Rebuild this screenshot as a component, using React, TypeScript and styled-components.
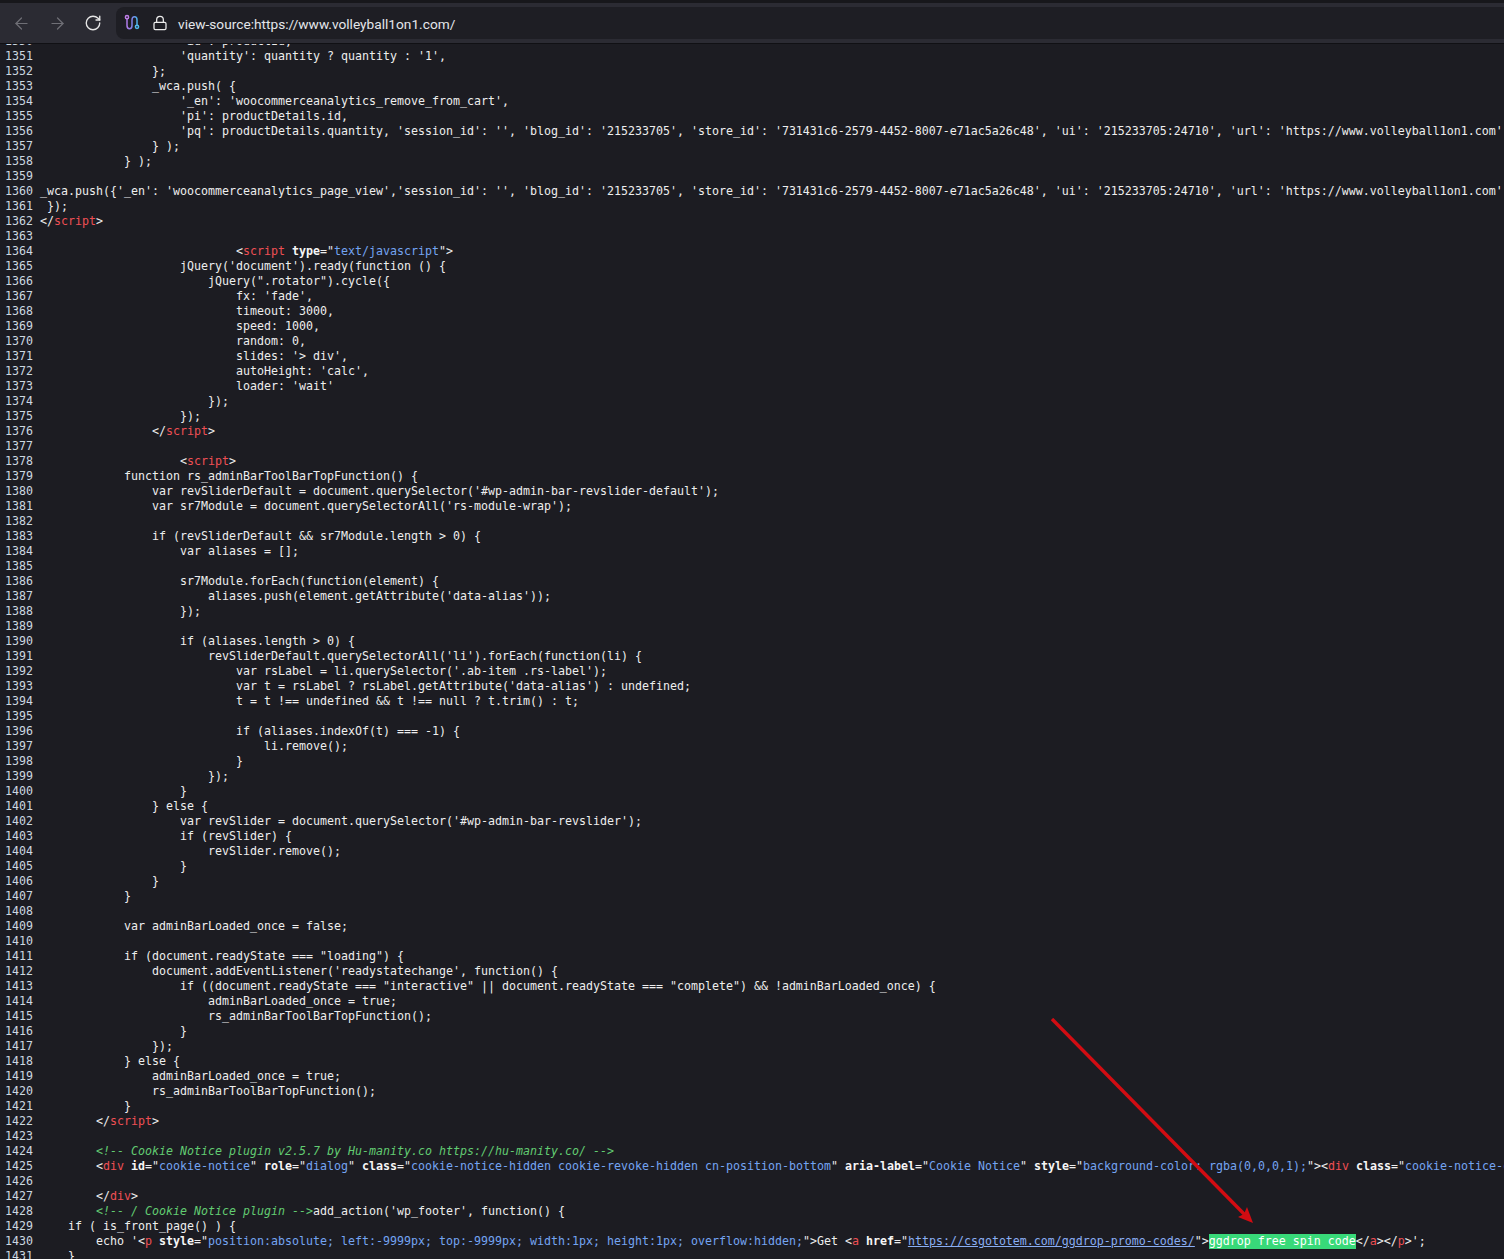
import styled, { createGlobalStyle } from "styled-components";
import { ArrowLeft, ArrowRight, Lock, RotateCw } from "lucide-react";

type TokenKind = "plain" | "tag" | "attr" | "val" | "comment" | "link" | "mark";
type Token = [TokenKind, string];
type Line = string | Token[];

const indent = (n: number, text: string) => " ".repeat(n) + text;
const tag = (name: string, open = "<", close = ">"): Token[] => [
    ["plain", open],
    ["tag", name],
    ["plain", close],
];

const lines: Line[] = [
    indent(20, "'id': productId,"),
    indent(20, "'quantity': quantity ? quantity : '1',"),
    indent(16, "};"),
    indent(16, "_wca.push( {"),
    indent(20, "'_en': 'woocommerceanalytics_remove_from_cart',"),
    indent(20, "'pi': productDetails.id,"),
    indent(20, "'pq': productDetails.quantity, 'session_id': '', 'blog_id': '215233705', 'store_id': '731431c6-2579-4452-8007-e71ac5a26c48', 'ui': '215233705:24710', 'url': 'https://www.volleyball1on1.com', 'woo_version': '9.9.5'"),
    indent(16, "} );"),
    indent(12, "} );"),
    "",
    "_wca.push({'_en': 'woocommerceanalytics_page_view','session_id': '', 'blog_id': '215233705', 'store_id': '731431c6-2579-4452-8007-e71ac5a26c48', 'ui': '215233705:24710', 'url': 'https://www.volleyball1on1.com', 'woo_version': '9.9.5'",
    " });",
    tag("script", "</"),
    "",
    [["plain", indent(28, "<")], ["tag", "script"], ["plain", " "], ["attr", "type"], ["plain", "=\""], ["val", "text/javascript"], ["plain", "\">"]],
    indent(20, "jQuery('document').ready(function () {"),
    indent(24, "jQuery(\".rotator\").cycle({"),
    indent(28, "fx: 'fade',"),
    indent(28, "timeout: 3000,"),
    indent(28, "speed: 1000,"),
    indent(28, "random: 0,"),
    indent(28, "slides: '> div',"),
    indent(28, "autoHeight: 'calc',"),
    indent(28, "loader: 'wait'"),
    indent(24, "});"),
    indent(20, "});"),
    tag("script", indent(16, "</")),
    "",
    tag("script", indent(20, "<")),
    indent(12, "function rs_adminBarToolBarTopFunction() {"),
    indent(16, "var revSliderDefault = document.querySelector('#wp-admin-bar-revslider-default');"),
    indent(16, "var sr7Module = document.querySelectorAll('rs-module-wrap');"),
    "",
    indent(16, "if (revSliderDefault && sr7Module.length > 0) {"),
    indent(20, "var aliases = [];"),
    "",
    indent(20, "sr7Module.forEach(function(element) {"),
    indent(24, "aliases.push(element.getAttribute('data-alias'));"),
    indent(20, "});"),
    "",
    indent(20, "if (aliases.length > 0) {"),
    indent(24, "revSliderDefault.querySelectorAll('li').forEach(function(li) {"),
    indent(28, "var rsLabel = li.querySelector('.ab-item .rs-label');"),
    indent(28, "var t = rsLabel ? rsLabel.getAttribute('data-alias') : undefined;"),
    indent(28, "t = t !== undefined && t !== null ? t.trim() : t;"),
    "",
    indent(28, "if (aliases.indexOf(t) === -1) {"),
    indent(32, "li.remove();"),
    indent(28, "}"),
    indent(24, "});"),
    indent(20, "}"),
    indent(16, "} else {"),
    indent(20, "var revSlider = document.querySelector('#wp-admin-bar-revslider');"),
    indent(20, "if (revSlider) {"),
    indent(24, "revSlider.remove();"),
    indent(20, "}"),
    indent(16, "}"),
    indent(12, "}"),
    "",
    indent(12, "var adminBarLoaded_once = false;"),
    "",
    indent(12, "if (document.readyState === \"loading\") {"),
    indent(16, "document.addEventListener('readystatechange', function() {"),
    indent(20, "if ((document.readyState === \"interactive\" || document.readyState === \"complete\") && !adminBarLoaded_once) {"),
    indent(24, "adminBarLoaded_once = true;"),
    indent(24, "rs_adminBarToolBarTopFunction();"),
    indent(20, "}"),
    indent(16, "});"),
    indent(12, "} else {"),
    indent(16, "adminBarLoaded_once = true;"),
    indent(16, "rs_adminBarToolBarTopFunction();"),
    indent(12, "}"),
    tag("script", indent(8, "</")),
    "",
    [["plain", indent(8, "")], ["comment", "<!-- Cookie Notice plugin v2.5.7 by Hu-manity.co https://hu-manity.co/ -->"]],
    [
        ["plain", indent(8, "<")], ["tag", "div"], ["plain", " "],
        ["attr", "id"], ["plain", "=\""], ["val", "cookie-notice"], ["plain", "\" "],
        ["attr", "role"], ["plain", "=\""], ["val", "dialog"], ["plain", "\" "],
        ["attr", "class"], ["plain", "=\""], ["val", "cookie-notice-hidden cookie-revoke-hidden cn-position-bottom"], ["plain", "\" "],
        ["attr", "aria-label"], ["plain", "=\""], ["val", "Cookie Notice"], ["plain", "\" "],
        ["attr", "style"], ["plain", "=\""], ["val", "background-color: rgba(0,0,0,1);"], ["plain", "\"><"],
        ["tag", "div"], ["plain", " "],
        ["attr", "class"], ["plain", "=\""], ["val", "cookie-notice-container"], ["plain", "\">"],
    ],
    "",
    tag("div", indent(8, "</")),
    [["plain", indent(8, "")], ["comment", "<!-- / Cookie Notice plugin -->"], ["plain", "add_action('wp_footer', function() {"]],
    indent(4, "if ( is_front_page() ) {"),
    [
        ["plain", indent(8, "echo '<")], ["tag", "p"], ["plain", " "],
        ["attr", "style"], ["plain", "=\""], ["val", "position:absolute; left:-9999px; top:-9999px; width:1px; height:1px; overflow:hidden;"], ["plain", "\">Get <"],
        ["tag", "a"], ["plain", " "],
        ["attr", "href"], ["plain", "=\""], ["link", "https://csgototem.com/ggdrop-promo-codes/"], ["plain", "\">"],
        ["mark", "ggdrop free spin code"],
        ["plain", "</"], ["tag", "a"], ["plain", "></"], ["tag", "p"], ["plain", ">';"],
    ],
    indent(4, "}"),
];

const FIRST_LINE = 1350;

const ExtensionIcon = () => (
    <svg width="18" height="18" viewBox="0 0 18 18" fill="none" strokeWidth="1.5">
        <defs>
            <linearGradient id="extStroke" x1="0" y1="0" x2="1" y2="0">
                <stop offset="0" stopColor="#b07ae8" />
                <stop offset="0.55" stopColor="#7c84e8" />
                <stop offset="1" stopColor="#4cb2ea" />
            </linearGradient>
        </defs>
        <path d="M3 4.5V11.5C3 15.8 8 15.8 8 11.5V6C8 1.8 13 1.8 13 6V11" stroke="url(#extStroke)" />
        <circle cx="3" cy="3.2" r="1.6" stroke="#c07ee8" />
        <circle cx="13" cy="12.8" r="1.6" stroke="#52bdf0" />
    </svg>
);

export default function App() {
    return (
        <Page>
            <GlobalStyle />
            <TopStrip />
            <Toolbar>
                <NavButton $dim>
                    <ArrowLeft size={19} strokeWidth={1.5} />
                </NavButton>
                <NavButton $dim>
                    <ArrowRight size={19} strokeWidth={1.5} />
                </NavButton>
                <NavButton>
                    <RotateCw size={18} strokeWidth={1.8} />
                </NavButton>
                <AddressBar>
                    <ExtensionIcon />
                    <Lock size={16} strokeWidth={1.9} color="#ececec" />
                    <UrlText>view-source:https://www.volleyball1on1.com/</UrlText>
                </AddressBar>
            </Toolbar>
            <SourceView>
                <SourceLines>
                    {lines.map((line, i) => (
                        <Row key={i}>
                            <LineNumber>{FIRST_LINE + i}</LineNumber>
                            <Code>
                                {typeof line === "string"
                                    ? line
                                    : line.map(([kind, text], j) => (
                                          <Tok key={j} $kind={kind}>
                                              {text}
                                          </Tok>
                                      ))}
                            </Code>
                        </Row>
                    ))}
                </SourceLines>
                <Arrow width="230" height="230" viewBox="0 0 230 230">
                    <line x1="2" y1="1" x2="198" y2="200" stroke="#d20c12" strokeWidth="3.4" />
                    <path d="M203 205L188 199L194 196L197 189Z" fill="#d20c12" />
                </Arrow>
            </SourceView>
        </Page>
    );
}

const GlobalStyle = createGlobalStyle`
  html, body {
    margin: 0;
    padding: 0;
    background: #1c1c22;
  }
`;

const Page = styled.div`
  width: 1504px;
  height: 1259px;
  overflow: hidden;
  display: flex;
  flex-direction: column;
  background: #1c1c22;
`;

const TopStrip = styled.div`
  height: 3px;
  background: #17171b;
  border-bottom: 4px solid #2b2b33;
`;

const Toolbar = styled.div`
  height: 36px;
  box-sizing: border-box;
  display: flex;
  background: #2b2b33;
  border-bottom: 4px solid #2b2b33;
  box-shadow: 0 1px 0 #101014;
  position: relative;
  z-index: 1;
`;

const NavButton = styled.div<{ $dim?: boolean }>`
  width: 36px;
  flex: none;
  display: flex;
  align-items: center;
  justify-content: center;
  padding-left: 6px;
  box-sizing: border-box;
  color: ${(p) => (p.$dim ? "#6f6f76" : "#e6e6e6")};
`;

const AddressBar = styled.div`
  flex: 1;
  margin-left: 8px;
  display: flex;
  align-items: center;
  gap: 10px;
  padding-left: 8px;
  background: #1e1e24;
  border-radius: 8px 0 0 8px;
`;

const UrlText = styled.span`
  padding-top: 2px;
  font-family: Roboto, sans-serif;
  font-size: 13.7px;
  color: #e4e6ea;
`;

const SourceView = styled.div`
  flex: 1;
  min-height: 0;
  overflow: hidden;
  position: relative;
  background: #1c1c22;
  font-family: "DejaVu Sans Mono", monospace;
  font-size: 11.64px;
  line-height: 15px;
`;

const SourceLines = styled.div`
  margin-top: -9px;
`;

const Row = styled.div`
  display: flex;
  height: 15px;
  white-space: pre;
`;

const LineNumber = styled.span`
  width: 40px;
  flex: none;
  box-sizing: border-box;
  padding-left: 5px;
  color: #ccd8e0;
`;

const Code = styled.span`
  color: #eeeeee;
`;

const tokenColors: Record<TokenKind, string> = {
    plain: "#eeeeee",
    tag: "#ee4f54",
    attr: "#f6f6f6",
    val: "#74a4f2",
    comment: "#62cc72",
    link: "#8aaef4",
    mark: "#ffffff",
};

const Tok = styled.span<{ $kind: TokenKind }>`
  display: ${(p) => (p.$kind === "mark" ? "inline-block" : "inline")};
  color: ${(p) => tokenColors[p.$kind]};
  font-weight: ${(p) => (p.$kind === "attr" ? 700 : 400)};
  font-style: ${(p) => (p.$kind === "comment" ? "italic" : "normal")};
  text-decoration: ${(p) => (p.$kind === "link" ? "underline" : "none")};
  background: ${(p) => (p.$kind === "mark" ? "#38d979" : "transparent")};
`;

const Arrow = styled.svg`
  position: absolute;
  left: 1050px;
  top: 975px;
  pointer-events: none;
`;
